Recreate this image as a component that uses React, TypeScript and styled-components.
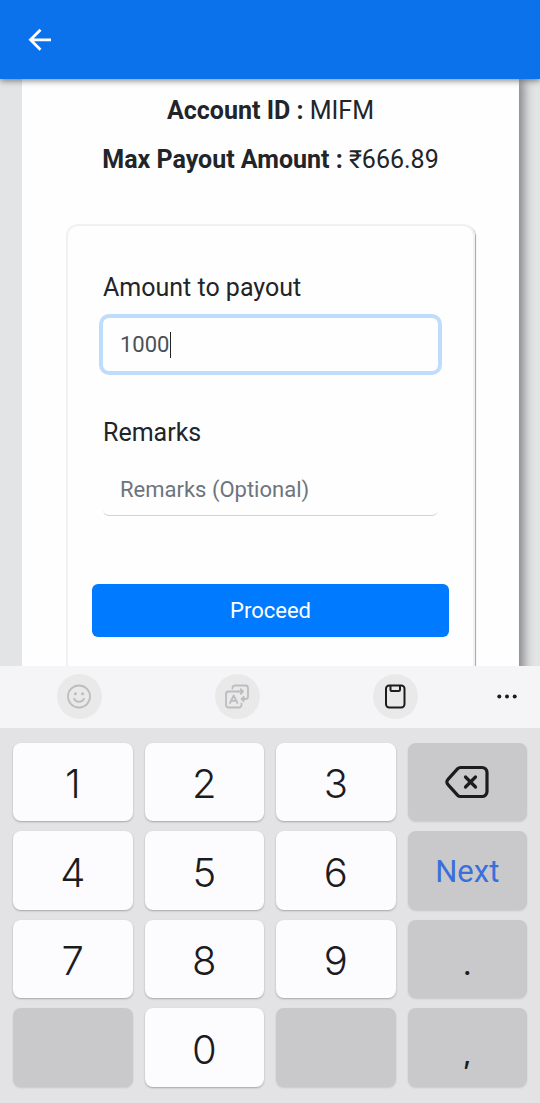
import React, { useState } from "react";
import styled, { createGlobalStyle, css } from "styled-components";

const GlobalStyle = createGlobalStyle`
  *, *::before, *::after { box-sizing: border-box; }
  body {
    margin: 0;
    background: #e3e4e6;
    color: #212529;
    font-family: Roboto, "Liberation Sans", sans-serif;
  }
  button { font: inherit; border: 0; padding: 0; margin: 0; cursor: pointer; }
`;

const Screen = styled.div`
  display: flex;
  flex-direction: column;
  height: 100vh;
`;

const AppBar = styled.header`
  position: relative;
  z-index: 1;
  flex: none;
  display: flex;
  align-items: center;
  height: 79px;
  padding: 0 24px;
  background: #0b72eb;
  box-shadow: 0 2px 6px rgba(0, 0, 0, 0.45);
`;

const BackButton = styled.button`
  display: flex;
  background: none;
  color: #fff;
`;

const Content = styled.main`
  flex: 1;
  min-height: 0;
  overflow: hidden;
  padding: 0 21px 0 22px;
`;

const Sheet = styled.section`
  min-height: 100%;
  padding: 12px 44px 0;
  background: #fefefe;
  box-shadow: 5px 0 10px rgba(0, 0, 0, 0.42);
  clip-path: inset(0 -22px 0 0);
`;

const Fact = styled.p`
  margin: 0 0 9px;
  font-size: 25px;
  line-height: 40px;
  text-align: center;
  white-space: nowrap;
`;

const Card = styled.form`
  display: flex;
  flex-direction: column;
  margin-top: 44px;
  padding: 42px 24px 60px;
  border: 2px solid #f1f1f1;
  border-radius: 12px;
  box-shadow: 1px 1px 1px rgba(0, 0, 0, 0.35);
`;

const Field = styled.div`
  display: flex;
  flex-direction: column;
  gap: 10px;
  margin: 0 11px 42px;
`;

const Label = styled.label`
  font-size: 25px;
  line-height: 40px;
`;

const InputBox = styled.div`
  position: relative;
  display: flex;
  font-size: 22px;
`;

const Input = styled.input<{ $active?: boolean }>`
  width: 100%;
  height: 53px;
  padding: 0 17px;
  border: 0;
  border-bottom: 1px solid #ced4da;
  border-radius: 6px;
  outline: 0;
  background: #fefefe;
  color: #495057;
  font: inherit;
  caret-color: transparent;
  &::placeholder { color: #6c757d; opacity: 1; }
  ${(p) => p.$active && css`
    border-bottom-color: #fefefe;
    box-shadow: 0 0 0 4px #bfdcfc;
  `}
`;

const Caret = styled.span<{ $chars: number }>`
  position: absolute;
  top: 14px;
  left: calc(18px + ${(p) => p.$chars}ch);
  width: 1px;
  height: 26px;
  background: #212529;
`;

const ProceedButton = styled.button`
  height: 53px;
  margin-top: 26px;
  border-radius: 6px;
  background: #007bff;
  color: #fff;
  font-size: 22px;
`;

const Keyboard = styled.footer`
  flex: none;
  background: #e3e3e5;
`;

const Toolbar = styled.div`
  display: grid;
  grid-template-columns: 1fr 1fr 1fr 66px;
  place-items: center;
  height: 62px;
  background: #f5f5f7;
`;

const ToolButton = styled.button<{ $plain?: boolean; $dim?: boolean }>`
  display: flex;
  align-items: center;
  justify-content: center;
  width: 45px;
  height: 45px;
  border-radius: 50%;
  background: ${(p) => (p.$plain ? "none" : "#e9e9ea")};
  color: ${(p) => (p.$dim ? "#bdbdbf" : "#1c1c1e")};
`;

const Keypad = styled.div`
  display: grid;
  grid-template-columns: repeat(4, 1fr);
  grid-template-rows: repeat(4, 1fr);
  gap: 10px 12px;
  height: 34vh;
  padding: 15px 13px 16px;
`;

const Key = styled.button<{ $kind: "digit" | "mark" | "action" | "blank" }>`
  display: flex;
  align-items: center;
  justify-content: center;
  padding-top: 4px;
  border-radius: 8px;
  background: ${(p) => (p.$kind === "digit" ? "#fcfcfe" : "#c9c9cb")};
  box-shadow: 0 1px 2px ${(p) => (p.$kind === "digit" ? "rgba(0, 0, 0, 0.28)" : "rgba(0, 0, 0, 0.12)")};
  color: #1c1c1e;
  font-family: Inter, Roboto, sans-serif;
  font-size: 40px;
  font-weight: 350;
  line-height: 48px;
  ${(p) => p.$kind === "mark" && css`
    padding-top: 12px;
    font-size: 28px;
    font-weight: 500;
  `}
  ${(p) => p.$kind === "action" && css`
    padding-top: 2px;
    color: #3a6fdc;
    font-family: Roboto, sans-serif;
    font-size: 31px;
    font-weight: 400;
  `}
`;

const DeleteKey = styled(Key)`
  padding-top: 0;
  color: #1c1c1e;
`;

const BackIcon = () => (
  <svg width="30" height="30" viewBox="0 0 30 30" fill="none" stroke="currentColor" strokeWidth="2.8" aria-hidden>
    <path d="M27 14.800H6M16.500 4.800l-10 10 10 10" />
  </svg>
);

const SmileIcon = () => (
  <svg width="26" height="26" viewBox="0 0 26 26" fill="none" stroke="currentColor" strokeWidth="1.8" strokeLinecap="round" aria-hidden>
    <circle cx="13" cy="12.500" r="11" />
    <path d="M8 14.700c1 2.200 2.800 3.200 5 3.200s4-1 5-3.200" />
    <circle cx="9.400" cy="9.700" r="1.500" fill="currentColor" stroke="none" />
    <circle cx="16.600" cy="9.700" r="1.500" fill="currentColor" stroke="none" />
  </svg>
);

const TranslateIcon = () => (
  <svg width="26" height="26" viewBox="0 0 26 26" fill="none" stroke="currentColor" strokeWidth="1.8" strokeLinecap="round" strokeLinejoin="round" aria-hidden>
    <path d="M8.500 4.500V4a2.500 2.500 0 0 1 2.500-2.500h10.500A2.500 2.500 0 0 1 24 4v8.500a2.500 2.500 0 0 1-2.500 2.500H18" />
    <path d="M19.800 12.800L17.600 15l2.200 2.200" />
    <path d="M14 7.500H4.500A2.500 2.500 0 0 0 2 10v11a2.500 2.500 0 0 0 2.500 2.500h10.500a2.500 2.500 0 0 0 2.500-2.500V19.500" />
    <path d="M14 7.500h5M16.700 5.200L19 7.500l-2.300 2.300" />
    <path d="M6 19l3.700-7.500 3.700 7.500M7.200 16.800h5" />
  </svg>
);

const ClipboardIcon = () => (
  <svg width="26" height="26" viewBox="0 0 26 26" fill="none" stroke="currentColor" strokeWidth="2" strokeLinejoin="round" aria-hidden>
    <rect x="4" y="1.500" width="18.500" height="22" rx="3.200" />
    <path d="M8.500 1.500v4.200a1.400 1.400 0 0 0 1.400 1.400h6.700a1.400 1.400 0 0 0 1.400-1.400V1.500" />
  </svg>
);

const MoreIcon = () => (
  <svg width="22" height="6" viewBox="0 0 22 6" fill="currentColor" aria-hidden>
    <circle cx="3.300" cy="2.500" r="2" />
    <circle cx="11" cy="2.500" r="2" />
    <circle cx="18.700" cy="2.500" r="2" />
  </svg>
);

const DeleteIcon = () => (
  <svg width="44" height="34" viewBox="0 0 44 34" fill="none" stroke="currentColor" strokeWidth="3.200" strokeLinecap="round" strokeLinejoin="round" aria-hidden>
    <path d="M15.500 2.500H37a5 5 0 0 1 5 5v19a5 5 0 0 1-5 5H15.500a4 4 0 0 1-2.800-1.200L3 19.700a3.800 3.800 0 0 1 0-5.400L12.700 3.700A4 4 0 0 1 15.500 2.500z" />
    <path d="M20.500 12l10 10M30.500 12l-10 10" />
  </svg>
);

type KeyDef = { id: string; kind: "digit" | "mark" | "action" | "blank"; label?: string };

const keys: KeyDef[] = [
  { id: "1", kind: "digit" }, { id: "2", kind: "digit" }, { id: "3", kind: "digit" },
  { id: "delete", kind: "action", label: "Delete" },
  { id: "4", kind: "digit" }, { id: "5", kind: "digit" }, { id: "6", kind: "digit" },
  { id: "Next", kind: "action" },
  { id: "7", kind: "digit" }, { id: "8", kind: "digit" }, { id: "9", kind: "digit" },
  { id: ".", kind: "mark" },
  { id: "left", kind: "blank", label: "Blank" },
  { id: "0", kind: "digit" },
  { id: "right", kind: "blank", label: "Blank" },
  { id: ",", kind: "mark" },
];

export default function App() {
  const [amount, setAmount] = useState("1000");
  const [remarks, setRemarks] = useState("");

  const press = (key: KeyDef) => {
    if (key.id === "delete") setAmount(amount.slice(0, -1));
    else if (key.kind === "digit" || key.id === ".") setAmount(amount + key.id);
  };

  return (
    <>
      <GlobalStyle />
      <Screen>
        <AppBar>
          <BackButton type="button" aria-label="Back"><BackIcon /></BackButton>
        </AppBar>
        <Content>
          <Sheet>
            <Fact><b>Account ID :</b> MIFM</Fact>
            <Fact><b>Max Payout Amount :</b> ₹666.89</Fact>
            <Card onSubmit={(e) => e.preventDefault()}>
              <Field>
                <Label htmlFor="amount">Amount to payout</Label>
                <InputBox>
                  <Input id="amount" $active inputMode="decimal" value={amount} onChange={(e) => setAmount(e.target.value)} />
                  <Caret $chars={amount.length} />
                </InputBox>
              </Field>
              <Field>
                <Label htmlFor="remarks">Remarks</Label>
                <InputBox>
                  <Input id="remarks" placeholder="Remarks (Optional)" value={remarks} onChange={(e) => setRemarks(e.target.value)} />
                </InputBox>
              </Field>
              <ProceedButton type="submit">Proceed</ProceedButton>
            </Card>
          </Sheet>
        </Content>
        <Keyboard>
          <Toolbar>
            <ToolButton type="button" $dim aria-label="Emoji"><SmileIcon /></ToolButton>
            <ToolButton type="button" $dim aria-label="Translate"><TranslateIcon /></ToolButton>
            <ToolButton type="button" aria-label="Clipboard"><ClipboardIcon /></ToolButton>
            <ToolButton type="button" $plain aria-label="More"><MoreIcon /></ToolButton>
          </Toolbar>
          <Keypad>
            {keys.map((key) =>
              key.id === "delete" ? (
                <DeleteKey key={key.id} type="button" $kind="action" aria-label={key.label} onClick={() => press(key)}>
                  <DeleteIcon />
                </DeleteKey>
              ) : (
                <Key key={key.id} type="button" $kind={key.kind} aria-label={key.label} onClick={() => press(key)}>
                  {key.kind === "blank" ? null : key.id}
                </Key>
              )
            )}
          </Keypad>
        </Keyboard>
      </Screen>
    </>
  );
}
